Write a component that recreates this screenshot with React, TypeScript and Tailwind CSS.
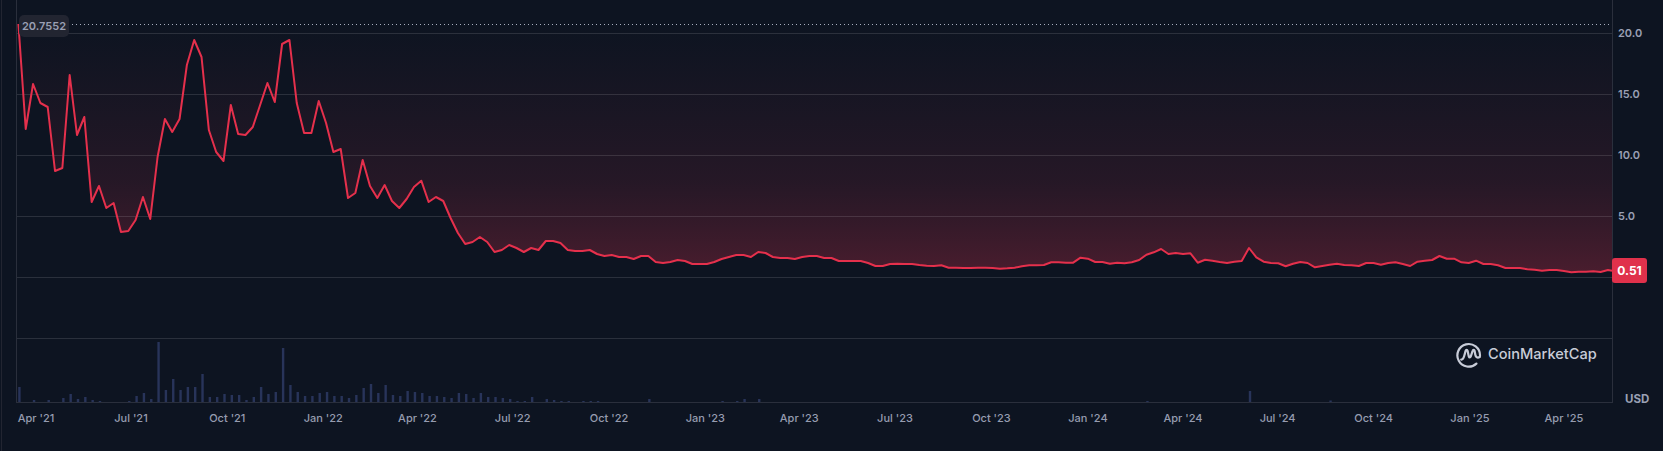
const LINE = [24,129,84,103,107,171,168,75,135,117,202,186,208,203,232,231,220,197,219,157,119,132,119,65,40,57,130,152,161,105,134,135,127,105,83,102,44,40,103,133,133,101,123,152,149,198,193,160,186,198,185,201,208,199,187,180.7,202,197,201,218,233,244,242,237,242,252,250,245,248,252,248,250,241,241,243,250,251,251,250,254,256,255,257,257,259,256,256,262,263,262,260,261,264,264,264,262,259,257,255,255,257,252,253,257,258,258,259,257,256,256,258,258,261,261,261,261,263,266,266,264,263.7,264,264,265,265.7,266,265.3,267.7,267.7,268,268,267.7,267.7,268,268.7,268.3,267.7,266.3,265.3,265.3,265,262.3,262.3,262.7,262.7,257.7,258.7,262,262,263.7,262.7,263.3,262.3,260,254.7,252.3,249,254,253,254,253.3,262.7,259.7,260.7,262,263,261.7,261,248,257.3,261.7,263,263.3,266.3,263.7,262,263,267.3,266,264.7,263.7,265,265.3,266,263,263,264.7,263,262.3,264,266,261.7,260.7,260,256,258.7,258.7,262.3,263,260.7,264,264,265.3,268,268,268,269.3,269.7,270.7,270,270,271,272.3,271.7,271.7,271.3,272,270,270.7];

const VOLUME: Record<number, number> = {0:15,2:2,4:2,6:4,7:8,8:3,9:5,10:2,11:1,15:1,16:6,17:9,18:3,19:60,20:12,21:23,22:12,23:15,24:15,25:28,26:5,27:5,28:8,29:7,30:7,31:2,32:5,33:15,34:8,35:10,36:54,37:17,38:10,39:6,40:6,41:9,42:10,43:6,44:6,45:4,46:7,47:14,48:18,49:9,50:17,51:7,52:6,53:11,54:10,55:9,56:6,57:6,58:5,59:4,60:9,61:8,62:4,63:9,64:5,65:5,66:4,67:3,68:1,69:1,70:5,72:3,73:2,74:1,75:1,77:1,78:1,79:1,86:3,96:1,98:1,99:3,101:3,154:1,168:11,179:1.5};

const X_LABELS: [string, number][] = [["Apr '21",36],["Jul '21",131],["Oct '21",227.3],["Jan '22",323.3],["Apr '22",417.5],["Jul '22",512.7],["Oct '22",609],["Jan '23",705.3],["Apr '23",799.3],["Jul '23",895],["Oct '23",991.5],["Jan '24",1088],["Apr '24",1183],["Jul '24",1277.7],["Oct '24",1373.7],["Jan '25",1470],["Apr '25",1564]];

const pointX = (k: number) => Math.min(18.4 + k * 7.325, 1612);
const linePath = LINE.map((y, k) => `${k === 0 ? "M" : "L"}${pointX(k).toFixed(2)} ${y}`).join(" ");
const areaPath = `${linePath} L1612 24 L18.4 24 Z`;
const GRID = [33.5, 94.5, 155.5, 216.5, 277.5, 338.5];
const CELL = 60;

function Chart() {
  return (
    <svg width="1611" height="403" viewBox="2 0 1611 403" className="block shrink-0">
      <defs>
        <linearGradient id="fade" gradientUnits="userSpaceOnUse" x1="0" y1="24" x2="0" y2="277">
          <stop offset="0" stopColor="#ea3450" stopOpacity="0" />
          <stop offset="0.3" stopColor="#ea3450" stopOpacity="0.05" />
          <stop offset="0.62" stopColor="#ea3450" stopOpacity="0.11" />
          <stop offset="0.76" stopColor="#ea3450" stopOpacity="0.165" />
          <stop offset="1" stopColor="#ea3450" stopOpacity="0.28" />
        </linearGradient>
      </defs>
      <path d={areaPath} fill="url(#fade)" />
      {GRID.map((y) => (
        <line key={y} x1="16.5" x2="1612" y1={y} y2={y} stroke="#ffffff" strokeOpacity="0.12" />
      ))}
      <line x1="16.5" x2="16.5" y1="0" y2="403" stroke="#2a2f3c" />
      <line x1="1612.5" x2="1612.5" y1="0" y2="403" stroke="#2a2f3c" />
      <line x1="16.5" x2="1612" y1="402.5" y2="402.5" stroke="#2a2f3c" />
      <line x1="72" x2="1611" y1="24.5" y2="24.5" stroke="#a8aebf" strokeDasharray="1 3" />
      {Object.entries(VOLUME).map(([k, h]) => (
        <rect key={k} x={18.4 + Number(k) * 7.325 - 0.2} y={402 - h} width="2.4" height={h} fill="#28345a" />
      ))}
      <path d={linePath} fill="none" stroke="#e5304c" strokeWidth="2" strokeLinejoin="round" />
    </svg>
  );
}

function Logo() {
  return (
    <svg width="26" height="26" viewBox="0 0 26 26" fill="none" stroke="#c8ccd8" strokeWidth="2.2" strokeLinecap="round" strokeLinejoin="round">
      <path d="M24 13.4 A11.3 11.3 0 1 0 20.4 21.6" />
      <path d="M5.2 17.6 C7.4 17.8 8 15.4 8.6 12.6 L9.6 8.8 C10 7.4 11.2 7.4 11.6 8.8 L12.8 14.4 C13.2 15.8 14.3 15.8 14.8 14.4 L16.6 8.8 C17 7.4 18.3 7.4 18.6 8.8 L19.3 12.8 C19.7 15.2 21.4 16.4 24 14.8" />
    </svg>
  );
}

export default function App() {
  return (
    <div className="relative flex h-[451px] w-full overflow-hidden bg-[#0d1421] font-['Inter',sans-serif]">
      <div className="ml-px w-px shrink-0 bg-[#222531]" />
      <div className="flex min-w-0 flex-1 flex-col">
        <div className="flex h-[407px]">
          <Chart />
          <div className="flex w-[50px] flex-col pt-[3px] pl-[5px] text-[11px] font-semibold text-[#9aa0b4]">
            <div className="flex h-[61px] items-center">20.0</div>
            <div className="flex h-[61px] items-center">15.0</div>
            <div className="flex h-[61px] items-center">10.0</div>
            <div className="flex h-[61px] items-center">5.0</div>
            <div className="mt-auto ml-[7px] text-[11.5px] leading-4 font-bold">USD</div>
          </div>
        </div>
        <div className="flex h-[22px] items-center text-[11px] font-medium text-[#969cb0]">
          {X_LABELS.map(([label, center], i) => (
            <div
              key={label}
              className="shrink-0 text-center whitespace-nowrap"
              style={{ width: CELL, marginLeft: i === 0 ? center - CELL / 2 - 2 : center - X_LABELS[i - 1][1] - CELL }}
            >
              {label}
            </div>
          ))}
        </div>
      </div>

      <div className="absolute top-[15px] left-[19px] flex h-[22px] w-[50px] items-center justify-center rounded-[5px] bg-[#222531] text-[11px] font-semibold text-[#9aa0b4]">
        20.7552
      </div>
      <div className="absolute top-[258px] left-[1612px] flex h-[25px] w-[35px] items-center justify-center rounded-[3px] bg-[#e0314b] text-xs font-bold text-white">
        0.51
      </div>
      <div className="absolute top-[342px] left-[1456px] flex items-center gap-[6px] text-[14.6px] font-medium text-[#c8ccd8]">
        <Logo />
        <span>CoinMarketCap</span>
      </div>
    </div>
  );
}
